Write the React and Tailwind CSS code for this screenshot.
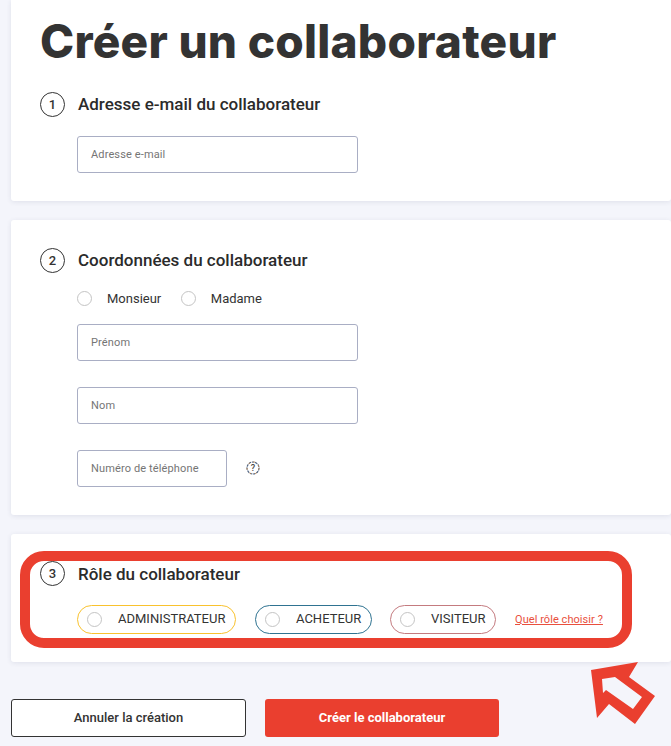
const roboto = "font-['Roboto',sans-serif]";

function Step({ n, title, className = "", titleClass = "-mt-[2px]" }) {
  return (
    <div className={`flex items-center gap-[13px] ${className}`}>
      <span className="flex h-[25px] w-[25px] shrink-0 items-center justify-center rounded-full border border-[#333333] text-[13px] font-medium text-[#333333]">{n}</span>
      <h2 className={`text-[17px] font-medium leading-[24px] text-[#2b2b2b] ${titleClass}`}>{title}</h2>
    </div>
  );
}

function Field({ label, className = "w-[281px] h-[37px]", pad = "pt-[2px]" }) {
  return (
    <div className={`flex items-center rounded-[3px] border border-[#a9aec4] bg-white pl-[13px] text-[11px] tracking-[0.13px] text-[#757575] ${pad} ${className}`}>
      {label}
    </div>
  );
}

function Radio() {
  return <span className="block h-[15px] w-[15px] shrink-0 rounded-full border border-[#c4c4c4] bg-white" />;
}

function Pill({ label, border, width }) {
  return (
    <div className={`flex h-[29px] items-center rounded-full border pl-[9px] text-[13px] text-[#333333] ${border} ${width}`}>
      <Radio />
      <span className="-mt-[1px] ml-[16px]">{label}</span>
    </div>
  );
}

export default function App() {
  return (
    <div className={`relative h-[746px] w-[671px] overflow-hidden bg-[#f4f5fb] pl-[11px] ${roboto}`}>
      <section className="h-[201px] rounded-b-[3px] bg-white pl-[29px] pt-[14px] shadow-[0_1px_5px_rgba(40,50,90,0.10)]">
        <h1 className="font-['Inter',sans-serif] text-[46px] font-extrabold leading-[54px] tracking-[0.25px] text-[#333333]">Créer un collaborateur</h1>
        <Step n="1" title="Adresse e-mail du collaborateur" className="mt-[24px]" />
        <div className="ml-[37px] mt-[19px]"><Field label="Adresse e-mail" pad="pt-[1px]" /></div>
      </section>

      <section className="mt-[19px] h-[295px] rounded-[3px] bg-white pl-[29px] pt-[28px] shadow-[0_1px_5px_rgba(40,50,90,0.10)]">
        <Step n="2" title="Coordonnées du collaborateur" />
        <div className="ml-[37px] mt-[16px] flex items-center text-[13px] text-[#333333]">
          <Radio />
          <span className="ml-[15px]">Monsieur</span>
          <span className="ml-[20px]"><Radio /></span>
          <span className="ml-[14.5px]">Madame</span>
        </div>
        <div className="ml-[37px] mt-[15px] flex flex-col gap-[26px]">
          <Field label="Prénom" className="h-[37px] w-[281px]" />
          <Field label="Nom" />
          <div className="flex items-center">
            <Field label="Numéro de téléphone" className="h-[37px] w-[150px]" />
            <svg width="14" height="14" viewBox="0 0 14 14" className="ml-[19px]">
              <circle cx="7" cy="7" r="6" fill="none" stroke="#4f6482" strokeWidth="1.2" strokeDasharray="2.5 0.8" />
              <circle cx="7" cy="7" r="6" fill="none" stroke="#d98a3a" strokeWidth="0.8" strokeDasharray="1.6 4" />
              <text x="7" y="10.2" textAnchor="middle" fontSize="9" fontWeight="500" fill="#444444">?</text>
            </svg>
          </div>
        </div>
      </section>

      <section className="mt-[19px] h-[128px] rounded-[3px] bg-white pl-[29px] pt-[28px] shadow-[0_1px_5px_rgba(40,50,90,0.10)]">
        <Step n="3" title="Rôle du collaborateur" className="-mt-[1px]" titleClass="" />
        <div className="ml-[37px] mt-[19px] flex items-center">
          <Pill label="ADMINISTRATEUR" border="border-[#f9c22e]" width="w-[159px]" />
          <div className="ml-[19px]"><Pill label="ACHETEUR" border="border-[#2f7391]" width="w-[117px]" /></div>
          <div className="ml-[18px]"><Pill label="VISITEUR" border="border-[#c47b7f]" width="w-[106px]" /></div>
          <a className="ml-[19px] pt-[1px] text-[11px] tracking-[0.06px] text-[#e94f3d] underline">Quel rôle choisir ?</a>
        </div>
      </section>

      <div className="mt-[37px] flex gap-[19px]">
        <button className="h-[38px] w-[235px] rounded-[3px] border border-[#333333] bg-white text-[13px] font-medium text-[#333333]">Annuler la création</button>
        <button className="h-[38px] w-[234px] rounded-[3px] bg-[#ea3f2f] text-[13px] font-bold text-white">Créer le collaborateur</button>
      </div>

      <div className="absolute left-[20px] top-[551px] h-[97px] w-[612px] rounded-[24px] border-[10px] border-[#ea3f2f]" />
      <svg className="absolute left-0 top-0" width="671" height="746" viewBox="0 0 671 746">
        <path fillRule="evenodd" fill="#ea3f2f" d="M591 670L638 662L629 677L655 696L635 724L609 704L597 718ZM602 679L615 677L642 697L633 709L606 690L603 693Z" />
      </svg>
    </div>
  );
}
